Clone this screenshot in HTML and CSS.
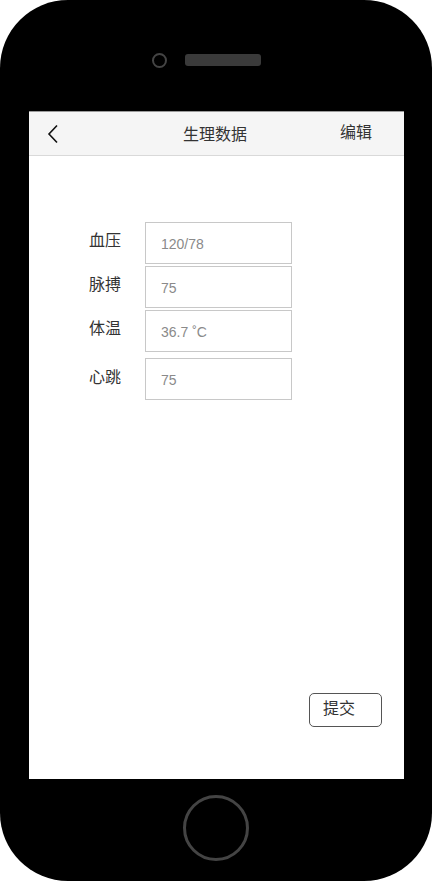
FILE: index.html
```html
<!DOCTYPE html>
<html lang="zh">
<head>
<meta charset="utf-8">
<title>生理数据</title>
<link rel="stylesheet" href="styles.css">
</head>
<body>
<div class="phone">
  <div class="phone-top">
    <span class="camera"></span>
    <span class="speaker"></span>
  </div>
  <div class="screen">
    <div class="header">
      <span class="back">
        <svg width="12" height="20" viewBox="0 0 12 20"><path d="M10 1.5 L2 10 L10 18.5" fill="none" stroke="#111" stroke-width="1.6"/></svg>
      </span>
      <span class="title">生理数据</span>
      <span class="edit">编辑</span>
    </div>
    <div class="content">
      <div class="form">
        <div class="row r1"><span class="label">血压</span><div class="field">120/78</div></div>
        <div class="row r2"><span class="label">脉搏</span><div class="field">75</div></div>
        <div class="row r3"><span class="label">体温</span><div class="field">36.7 ˚C</div></div>
        <div class="row r4"><span class="label">心跳</span><div class="field">75</div></div>
      </div>
      <div class="actions">
        <button class="submit">提交</button>
      </div>
    </div>
  </div>
  <div class="phone-bottom">
    <span class="home"></span>
  </div>
</div>
</body>
</html>
```

FILE: styles.css
```css
html, body {
  margin: 0;
  padding: 0;
  background: #fff;
}
body {
  font-family: "Noto Sans CJK SC", "Liberation Sans", sans-serif;
}
.phone {
  width: 432px;
  height: 881px;
  background: #000;
  border-radius: 68px;
  display: flex;
  flex-direction: column;
  overflow: hidden;
}
.phone-top {
  height: 111px;
  display: flex;
  align-items: flex-start;
  box-sizing: border-box;
  padding-top: 52px;
  padding-left: 152px;
  gap: 18px;
}
.camera {
  width: 11px;
  height: 11px;
  border: 2px solid #444;
  border-radius: 50%;
  margin-top: 1px;
}
.speaker {
  width: 76px;
  height: 12px;
  background: #3a3a3a;
  border-radius: 3px;
  margin-top: 2px;
}
.screen {
  margin-left: 29px;
  width: 375px;
  height: 668px;
  background: #fff;
  display: flex;
  flex-direction: column;
}
.header {
  height: 45px;
  box-sizing: border-box;
  background: #f5f5f5;
  border-top: 1px solid #9a9a9a;
  border-bottom: 1px solid #d9d9d9;
  display: flex;
  align-items: center;
  position: relative;
  color: #333;
  font-size: 16px;
}
.back {
  margin-left: 18px;
  display: flex;
  margin-top: 1px;
}
.title {
  position: absolute;
  left: 0;
  right: 0;
  text-align: center;
  top: 9px;
  padding-right: 3px;
}
.edit {
  margin-left: auto;
  margin-right: 32px;
  margin-top: -5px;
}
.content {
  flex: 1;
  display: flex;
  flex-direction: column;
}
.form {
  padding-top: 66px;
  padding-left: 60px;
  display: flex;
  flex-direction: column;
}
.row {
  display: flex;
  align-items: flex-start;
}
.r2 { margin-top: 2px; }
.r3 { margin-top: 2px; }
.r4 { margin-top: 6px; }
.label {
  width: 56px;
  font-size: 16px;
  color: #333;
  line-height: 20px;
  padding-top: 7px;
}
.r4 .label { padding-top: 8px; }
.field {
  width: 147px;
  height: 42px;
  box-sizing: border-box;
  border: 1px solid #c8c8c8;
  font-family: "Liberation Sans", Arial, sans-serif;
  font-size: 14px;
  color: #8a8a8a;
  padding-left: 15px;
  display: flex;
  align-items: center;
  padding-top: 1px;
}
.actions {
  margin-top: auto;
  margin-bottom: 52px;
  display: flex;
  justify-content: flex-end;
  padding-right: 22px;
}
.submit {
  width: 73px;
  height: 34px;
  box-sizing: border-box;
  background: #fff;
  border: 1px solid #555;
  border-radius: 5px;
  font-family: "Noto Sans CJK SC", sans-serif;
  font-size: 16px;
  color: #333;
  text-align: left;
  padding: 0 0 0 13px;
  line-height: 20px;
  display: flex;
  align-items: flex-start;
  padding-top: 3px;
}
.phone-bottom {
  flex: 1;
  display: flex;
  justify-content: center;
  padding-top: 16px;
}
.home {
  width: 60px;
  height: 60px;
  border: 3px solid #444;
  border-radius: 50%;
}
```
